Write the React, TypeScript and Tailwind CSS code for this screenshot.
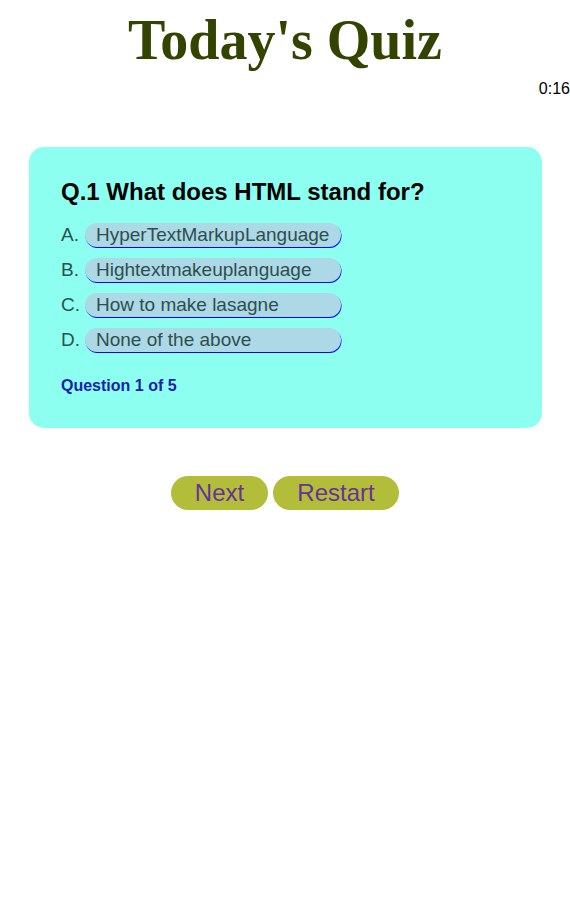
import React from "react";

const options = [
    { label: "A.", text: "HyperTextMarkupLanguage" },
    { label: "B.", text: "Hightextmakeuplanguage" },
    { label: "C.", text: "How to make lasagne" },
    { label: "D.", text: "None of the above" },
];

const App = () => {
    return (
        <div className="min-h-[913px] w-full bg-white font-['Liberation_Sans',Arial,sans-serif]">
            <h1 className="pt-[8px] text-center font-['Liberation_Serif',Georgia,serif] text-[56px] font-bold leading-[64px] text-[#334400]">
                Today's Quiz
            </h1>
            <div className="mt-[7px] text-right text-[16px] leading-[20px] text-black">0:16</div>

            <div className="ml-[29px] mr-[28px] mt-[48px] h-[281px] rounded-[15px] bg-[#8cfff0] px-[32px] pt-[30px]">
                <h2 className="text-[24px] font-bold leading-[30px] text-black">
                    Q.1 What does HTML stand for?
                </h2>
                <div className="mt-[16px] flex flex-col gap-[11px]">
                    {options.map((o) => (
                        <div key={o.label} className="flex items-center gap-[6px] text-[19px] text-[#2f4f4f]">
                            <span className="w-[18px] shrink-0 leading-[24px]">{o.label}</span>
                            <button className="h-[24px] w-[256px] rounded-[12px] bg-[#add8e6] pl-[11px] text-left leading-[24px] text-[#2f4f4f] shadow-[0.5px_1px_0_0_#0000ff]">
                                {o.text}
                            </button>
                        </div>
                    ))}
                </div>
                <div className="mt-[24px] text-[16px] font-bold leading-[20px] text-[#2020a8]">
                    Question 1 of 5
                </div>
            </div>

            <div className="mt-[48px] flex justify-center gap-[5px]">
                <button className="h-[34px] w-[97px] rounded-full bg-[#b2bd3a] text-[24px] leading-[34px] text-[#663399]">
                    Next
                </button>
                <button className="h-[34px] w-[126px] rounded-full bg-[#b2bd3a] text-[24px] leading-[34px] text-[#663399]">
                    Restart
                </button>
            </div>
        </div>
    );
};

export default App;
